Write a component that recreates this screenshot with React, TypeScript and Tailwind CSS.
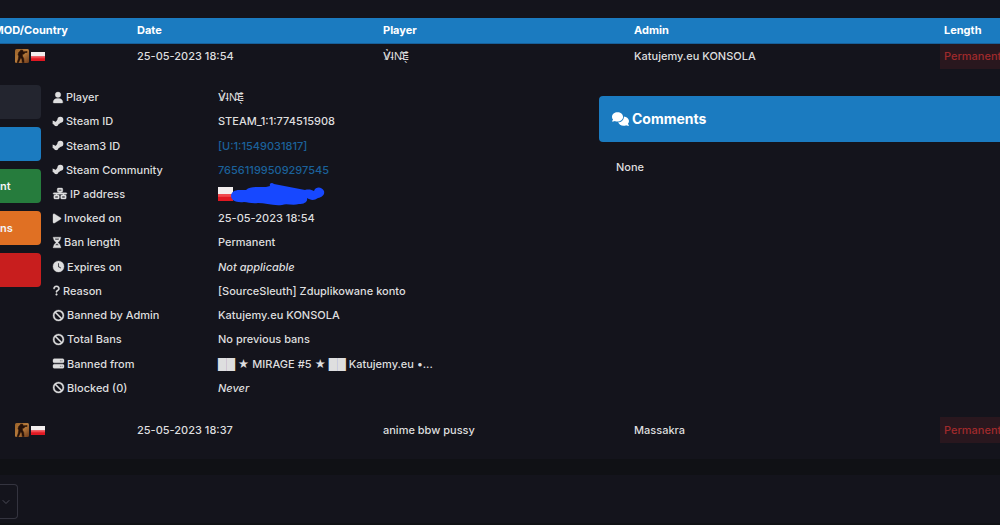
import type { ReactNode } from "react";
import type { IconType } from "react-icons";
import {
  FaBan,
  FaClock,
  FaComments,
  FaHourglassHalf,
  FaNetworkWired,
  FaPlay,
  FaQuestion,
  FaServer,
  FaSteamSymbol,
  FaUser,
} from "react-icons/fa6";
import { ChevronDown } from "lucide-react";

const PLAYER_NAME = "V̸̉I̵N̵̾͛E̵̖̊";

type Detail = {
  icon: IconType;
  iconWidth?: string;
  iconStroke?: number;
  label: string;
  value: ReactNode;
};

function PolandFlag({ className }: { className: string }) {
  return (
    <svg
      viewBox="0 0 14 10"
      preserveAspectRatio="none"
      className={className}
      role="img"
      aria-label="Poland"
    >
      <rect width="14" height="10" fill="#e01822" />
      <rect width="14" height="5" fill="#f3eeee" />
      <rect y="5" width="14" height="2" fill="#f0494e" />
    </svg>
  );
}

function GameIcon() {
  return (
    <svg
      viewBox="0 0 14 14"
      className="h-3.5 w-3.5"
      role="img"
      aria-label="Counter-Strike"
    >
      <defs>
        <linearGradient id="game-bg" x1="0" y1="0" x2="1" y2="1">
          <stop offset="0" stopColor="#9a6229" />
          <stop offset="0.5" stopColor="#b87c3c" />
          <stop offset="1" stopColor="#6e3a1a" />
        </linearGradient>
      </defs>
      <rect width="14" height="14" rx="1.5" fill="url(#game-bg)" />
      <path
        d="M5.4 1.2 7.4 1l.7 1 .1.8 3.9-.3v.9l-2.4.3-.5 1.2-1.9.5.4 2 1 2.1.4 4H7.3l-.4-3-1-2-1 2.3-1.4 2.9H2l1.2-3.5.5-3-.7-1.6.9-2.6 1.6-.9z"
        fill="#241008"
        stroke="#241008"
        strokeWidth="0.5"
      />
    </svg>
  );
}

function HiddenAddress() {
  return (
    <span className="-my-1 flex items-center">
      <PolandFlag className="h-3.5 w-[15px]" />
      <svg
        viewBox="0 0 94 24"
        className="-ml-0.5 h-6 w-[94px]"
        role="img"
        aria-label="Hidden address"
      >
        <path
          d="M0 14C0 10 4 8 8 8L15 8C19 4 25 5 35 5L39 4C38 1 41 0 43 2L74 8C78 7 81 8 83 9C85 4 91 5 93 9C94 13 91 15 87 16C83 19 79 18 76 16C77 20 73 22 68 22C61 24 56 21 51 23C42 24 34 21 27 21C21 22 17 20 13 20C5 21 0 18 0 14Z"
          fill="#1748ff"
        />
      </svg>
    </span>
  );
}

function ProfileLink({ children }: { children: ReactNode }) {
  return (
    <a href="#profile" className="text-[#1b619a] hover:underline">
      {children}
    </a>
  );
}

const details: Detail[] = [
  {
    icon: FaUser,
    iconWidth: "w-[10px]",
    label: "Player",
    value: PLAYER_NAME,
  },
  {
    icon: FaSteamSymbol,
    iconWidth: "w-[10px]",
    iconStroke: 50,
    label: "Steam ID",
    value: "STEAM_1:1:774515908",
  },
  {
    icon: FaSteamSymbol,
    iconWidth: "w-[10px]",
    iconStroke: 50,
    label: "Steam3 ID",
    value: <ProfileLink>[U:1:1549031817]</ProfileLink>,
  },
  {
    icon: FaSteamSymbol,
    iconWidth: "w-[10px]",
    iconStroke: 50,
    label: "Steam Community",
    value: <ProfileLink>76561199509297545</ProfileLink>,
  },
  {
    icon: FaNetworkWired,
    iconWidth: "w-[14px]",
    label: "IP address",
    value: <HiddenAddress />,
  },
  {
    icon: FaPlay,
    iconWidth: "w-[8px]",
    label: "Invoked on",
    value: "25-05-2023 18:54",
  },
  {
    icon: FaHourglassHalf,
    iconWidth: "w-[8px]",
    label: "Ban length",
    value: "Permanent",
  },
  { icon: FaClock, label: "Expires on", value: <em>Not applicable</em> },
  {
    icon: FaQuestion,
    iconWidth: "w-[7px]",
    label: "Reason",
    value: "[SourceSleuth] Zduplikowane konto",
  },
  { icon: FaBan, label: "Banned by Admin", value: "Katujemy.eu KONSOLA" },
  { icon: FaBan, label: "Total Bans", value: "No previous bans" },
  {
    icon: FaServer,
    label: "Banned from",
    value: "██ ★ MIRAGE #5 ★ ██ Katujemy.eu •...",
  },
  { icon: FaBan, label: "Blocked (0)", value: <em>Never</em> },
];

const actions = [
  { id: "details", text: "", color: "bg-[#23252f]" },
  { id: "profile", text: "", color: "bg-[#1b7bc0]" },
  { id: "comment", text: "nt", color: "bg-[#267c3d]" },
  { id: "bans", text: "ns", color: "bg-[#e07023]" },
  { id: "remove", text: "", color: "bg-[#c81e1e]" },
];

function BanRow({
  date,
  player,
  admin,
}: {
  date: string;
  player: string;
  admin: string;
}) {
  return (
    <tr className="h-[26px]">
      <td>
        <div className="flex items-center gap-0.5 pl-[15px]">
          <GameIcon />
          <PolandFlag className="h-[9px] w-3.5" />
        </div>
      </td>
      <td className="px-1">{date}</td>
      <td className="px-1">{player}</td>
      <td className="px-1">{admin}</td>
      <td className="overflow-hidden bg-[#29171e] px-1 text-[#a02a2c]">
        Permanent
      </td>
    </tr>
  );
}

function BanDetails() {
  return (
    <div className="flex items-start pt-4 pb-[17px]">
      <div className="flex w-[41px] shrink-0 flex-col gap-2">
        {actions.map((action) => (
          <button
            key={action.id}
            type="button"
            aria-label={action.text ? undefined : action.id}
            className={`flex h-[34px] items-center rounded-r text-[11px] font-semibold text-gray-100 ${action.color}`}
          >
            {action.text}
          </button>
        ))}
      </div>

      <table className="ml-3 h-[315px] w-[546px] shrink-0 table-fixed">
        <tbody>
          {details.map(
            ({
              icon: Icon,
              iconWidth = "w-[11px]",
              iconStroke = 16,
              label,
              value,
            }) => (
              <tr key={label}>
                <th scope="row" className="w-[165px] text-left font-medium">
                  <span className="flex items-center gap-[3px]">
                    <Icon
                      strokeWidth={iconStroke}
                      className={`h-[11px] shrink-0 overflow-visible ${iconWidth}`}
                    />
                    {label}
                  </span>
                </th>
                <td>{value}</td>
              </tr>
            ),
          )}
        </tbody>
      </table>

      <section className="mt-[11px] grow">
        <h2 className="flex h-[46px] items-center gap-[3px] rounded-l bg-[#1b7bc0] px-[13px] text-sm font-bold text-white">
          <FaComments className="h-[14px] w-[17px]" />
          Comments
        </h2>
        <p className="px-[17px] pt-[17px]">None</p>
      </section>
    </div>
  );
}

export default function App() {
  return (
    <main className="min-h-screen overflow-hidden bg-[#101115] font-['Inter','DejaVu_Sans',sans-serif] text-[11px] leading-4 font-medium text-[#dededf]">
      <section className="bg-[#14141c] pt-[18px] pb-4">
        <table className="w-full table-fixed whitespace-nowrap">
          <colgroup>
            <col className="w-[13.3%]" />
            <col className="w-[24.6%]" />
            <col className="w-[25.1%]" />
            <col className="w-[31%]" />
            <col className="w-[6%]" />
          </colgroup>
          <thead>
            <tr className="h-[25px] border-b border-[#17609a] bg-[#1b7bc0] text-left text-white">
              <th className="font-bold">
                <div className="flex w-[68px] justify-end">MOD/Country</div>
              </th>
              <th className="px-1 font-bold">Date</th>
              <th className="px-1 font-bold">Player</th>
              <th className="px-1 font-bold">Admin</th>
              <th className="px-1 font-bold">Length</th>
            </tr>
          </thead>
          <tbody>
            <BanRow
              date="25-05-2023 18:54"
              player={PLAYER_NAME}
              admin="Katujemy.eu KONSOLA"
            />
            <tr>
              <td colSpan={5}>
                <BanDetails />
              </td>
            </tr>
            <BanRow
              date="25-05-2023 18:37"
              player="anime bbw pussy"
              admin="Massakra"
            />
          </tbody>
        </table>
      </section>

      <footer className="mt-4 h-12 bg-[#14141c] pt-[9px]">
        <button
          type="button"
          aria-label="Choose page"
          className="flex h-[35px] w-[18px] items-center rounded-r border border-l-0 border-[#34343f] text-[#4b4b57]"
        >
          <ChevronDown className="h-3 w-3 shrink-0" />
        </button>
      </footer>
    </main>
  );
}
